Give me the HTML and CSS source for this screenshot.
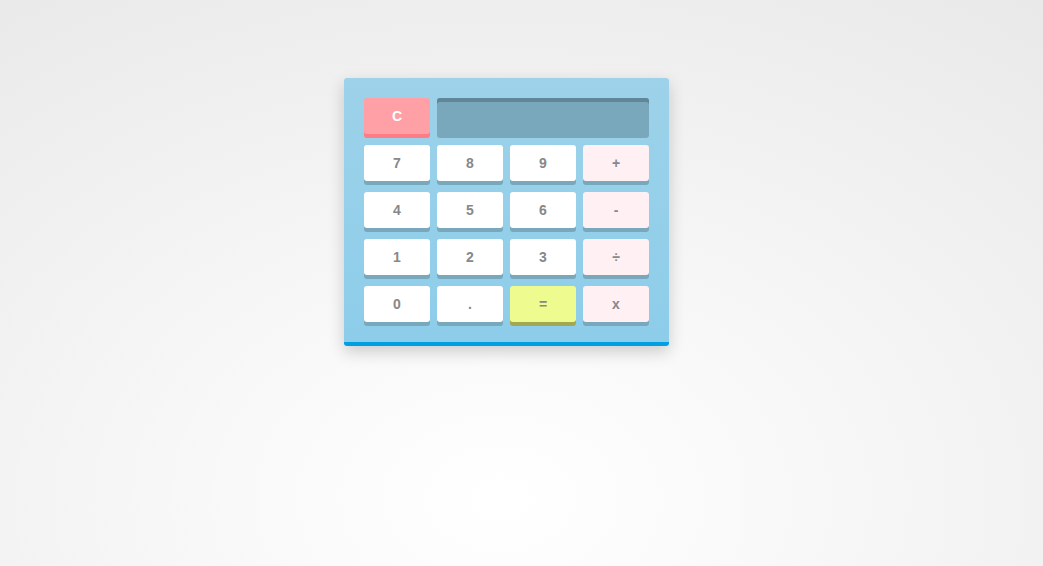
FILE: index.html
```html
<!DOCTYPE html>
<html>
<head>
<meta charset="utf-8">
<link rel="stylesheet" href="styles.css">
</head>
<body>
<div class="calc">
  <div class="keys">
    <button class="key clear">C</button>
    <div class="screen"></div>
    <button class="key">7</button>
    <button class="key">8</button>
    <button class="key">9</button>
    <button class="key op">+</button>
    <button class="key">4</button>
    <button class="key">5</button>
    <button class="key">6</button>
    <button class="key op">-</button>
    <button class="key">1</button>
    <button class="key">2</button>
    <button class="key">3</button>
    <button class="key op">÷</button>
    <button class="key">0</button>
    <button class="key">.</button>
    <button class="key eq">=</button>
    <button class="key op">x</button>
  </div>
</div>
</body>
</html>
```
FILE: styles.css
```css
html, body {
  margin: 0;
  height: 100%;
}
body {
  background: radial-gradient(ellipse 1000px 700px at 48% 88%, #ffffff 0%, #f8f8f8 30%, #e6e6e6 100%);
  background-color: #e6e6e6;
  font-family: "Liberation Sans", Arial, sans-serif;
  padding-top: 78px;
  box-sizing: border-box;
}
.calc {
  width: 325px;
  margin-left: 344px;
  box-sizing: border-box;
  padding: 20px 20px 20px 20px;
  background: linear-gradient(to bottom, #9dd2e9, #8dcdea);
  border-bottom: 4px solid #009ee3;
  border-radius: 3px;
  box-shadow: 0 6px 16px rgba(0, 0, 0, 0.18);
}
.keys {
  display: grid;
  grid-template-columns: repeat(4, 66px);
  grid-auto-rows: 36px;
  column-gap: 7px;
  row-gap: 11px;
}
.key {
  border: none;
  padding: 0;
  margin: 0;
  border-radius: 3px;
  background: #ffffff;
  box-shadow: 0 4px 0 #79a7bb;
  color: #888888;
  font-family: "Liberation Sans", Arial, sans-serif;
  font-weight: bold;
  font-size: 14px;
  text-align: center;
  line-height: 36px;
}
.key.op {
  background: #fff0f4;
}
.key.eq {
  background: #eefb8f;
  box-shadow: 0 4px 0 #a2a850;
}
.key.clear {
  background: #ff9fa6;
  box-shadow: 0 4px 0 #ff7b86;
  color: #ffffff;
}
.screen {
  grid-column: span 3;
  background: #79a7bb;
  border-radius: 3px;
  box-shadow: inset 0 4px 0 #5f8797, 0 4px 0 #79a7bb;
}
```
